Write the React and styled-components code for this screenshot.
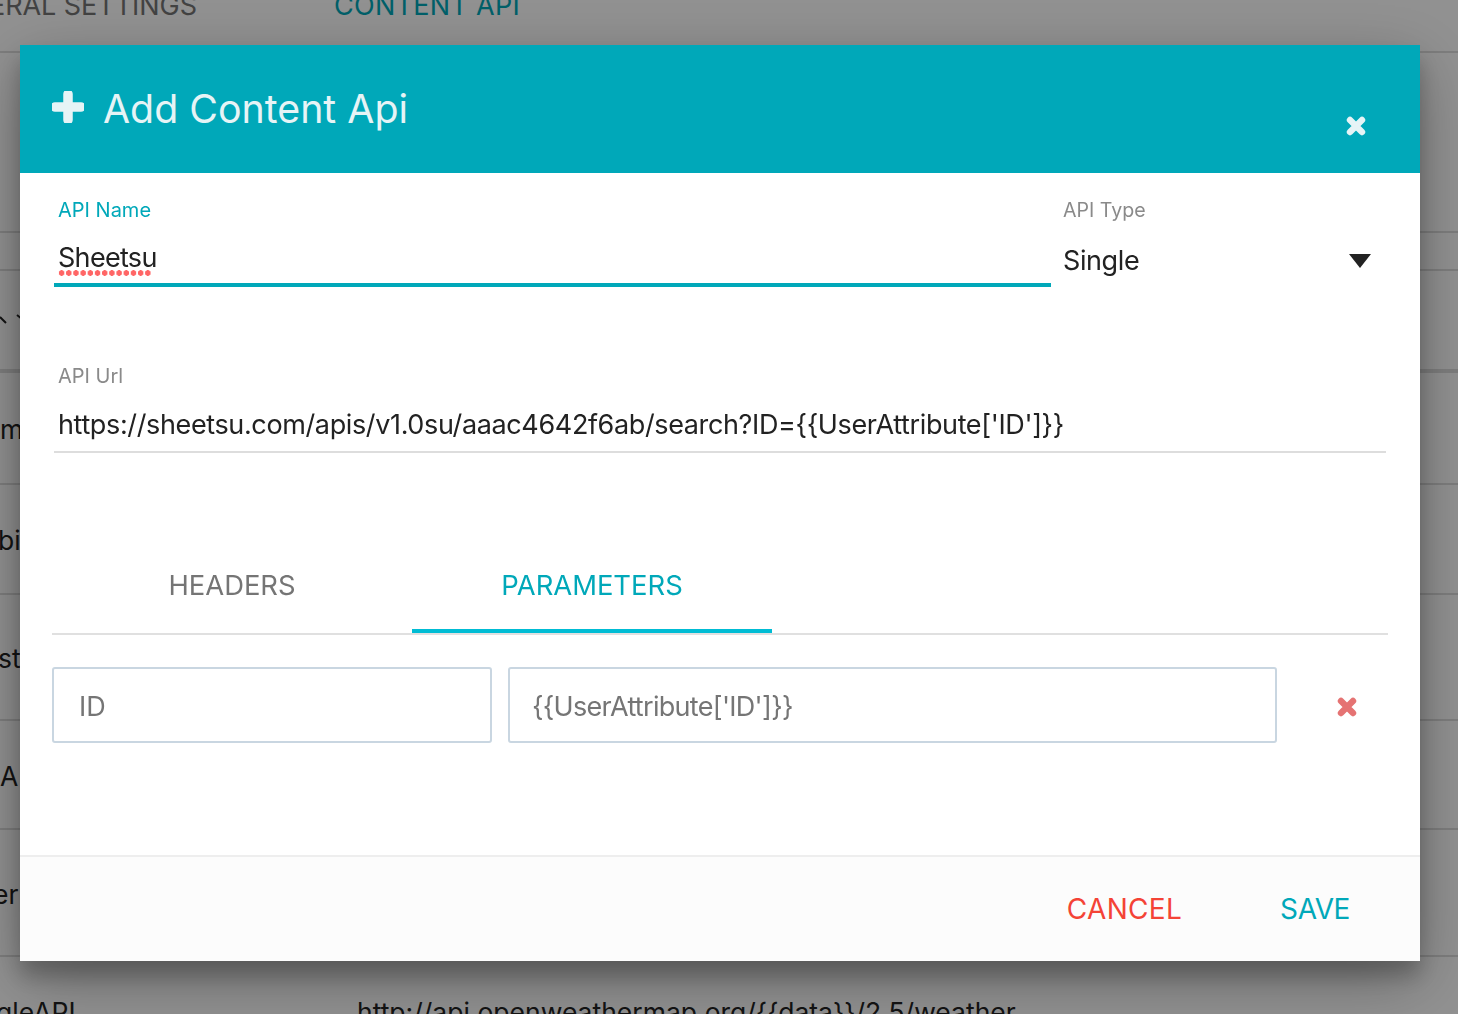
import styled, { createGlobalStyle } from "styled-components";

const GlobalStyle = createGlobalStyle`
  html, body {
    margin: 0;
    height: 100%;
    overflow: hidden;
    font-family: Inter, "Liberation Sans", sans-serif;
  }
`;

const backRows = [
  { height: 180 },
  { height: 38 },
  { height: 102, sort: true, strong: true },
  { height: 112, name: "m", x: 0 },
  { height: 110, name: "bi", x: -2 },
  { height: 126, name: "st", x: -2 },
  { height: 109, name: "A", x: 0 },
  { height: 127, name: "er", x: -7 },
  { height: 110, name: "gleAPI", x: -4, url: "http://api.openweathermap.org/{{data}}/2.5/weather" },
];

const PlusIcon = () => (
  <PlusSvg viewBox="0 0 32 32">
    <path d="M16 3v26M3 16h26" fill="none" stroke="currentColor" strokeWidth="9.5" strokeLinecap="round" />
  </PlusSvg>
);

const CrossIcon = () => (
  <svg width="20" height="20" viewBox="0 0 20 20">
    <path d="M4 4l12 12M16 4L4 16" fill="none" stroke="currentColor" strokeWidth="6.4" strokeLinecap="round" />
  </svg>
);

const SortMarks = () => (
  <svg width="24" height="14" viewBox="0 0 24 14">
    <path d="M0 3l6 6M17 1l5 4" fill="none" stroke="#222" strokeWidth="2" />
  </svg>
);

const App = () => {
  return (
    <>
      <GlobalStyle />
      <Page>
        <BackTabs>
          <BackTab>ERAL SETTINGS</BackTab>
          <BackTab $active>CONTENT API</BackTab>
        </BackTabs>
        {backRows.map((row, i) => (
          <BackRow key={i} $height={row.height} $strong={row.strong}>
            <BackName $x={row.x}>
              {row.sort && <SortMarks />}
              {row.name}
            </BackName>
            <BackUrl>{row.url}</BackUrl>
          </BackRow>
        ))}
      </Page>

      <Overlay>
        <Modal>
          <Header>
            <HeaderTitle>
              <PlusIcon />
              <Title>Add Content Api</Title>
            </HeaderTitle>
            <CloseButton>
              <CrossIcon />
            </CloseButton>
          </Header>

          <Body>
            <TopFields>
              <Field>
                <Label $focus>API Name</Label>
                <NameValue>
                  <Misspelled>Sheetsu</Misspelled>
                </NameValue>
              </Field>
              <SelectField>
                <SelectLabel>API Type</SelectLabel>
                <SelectValue>
                  Single
                  <Caret />
                </SelectValue>
              </SelectField>
            </TopFields>

            <UrlField>
              <Label>API Url</Label>
              <UrlValue>{"https://sheetsu.com/apis/v1.0su/aaac4642f6ab/search?ID={{UserAttribute['ID']}}"}</UrlValue>
            </UrlField>

            <Tabs>
              <Tab>HEADERS</Tab>
              <Tab $active>PARAMETERS</Tab>
            </Tabs>

            <ParamRow>
              <ParamInput $width={440} $pad={25}>
                ID
              </ParamInput>
              <ParamInput $width={769} $pad={22} $spacing={-0.7}>
                {"{{UserAttribute['ID']}}"}
              </ParamInput>
              <DeleteButton>
                <CrossIcon />
              </DeleteButton>
            </ParamRow>
          </Body>

          <Footer>
            <FooterButton $color="#f44336" $spacing={0.3}>
              CANCEL
            </FooterButton>
            <FooterButton $color="#00a8b9" $spacing={-0.4}>
              SAVE
            </FooterButton>
          </Footer>
        </Modal>
      </Overlay>
    </>
  );
};

export default App;

const Page = styled.div`
  height: 1014px;
  overflow: hidden;
  background: #fff;
  color: #222;
`;

const BackTabs = styled.div`
  display: flex;
  gap: 137px;
  height: 62px;
  box-sizing: border-box;
  border-bottom: 2px solid #ddd;
  margin-top: -9px;
  margin-left: -11px;
`;

const BackTab = styled.div`
  font-size: 27px;
  line-height: 30px;
  letter-spacing: ${(p) => (p.$active ? 0.3 : -0.05)}px;
  color: ${(p) => (p.$active ? "#00a8b9" : "#757575")};
`;

const BackRow = styled.div`
  display: flex;
  align-items: center;
  height: ${(p) => p.$height}px;
  box-sizing: border-box;
  padding-top: 2px;
  border-bottom: ${(p) => (p.$strong ? 4 : 2)}px solid #ddd;
  font-size: 26.5px;
`;

const BackName = styled.div`
  display: flex;
  flex: none;
  width: 357px;
  box-sizing: border-box;
  margin-left: ${(p) => p.$x || 0}px;
  margin-right: ${(p) => -(p.$x || 0)}px;
`;

const BackUrl = styled.div`
  white-space: nowrap;
`;

const Overlay = styled.div`
  position: fixed;
  inset: 0;
  background: rgba(0, 0, 0, 0.43);
`;

const Modal = styled.div`
  position: absolute;
  left: 20px;
  top: 45px;
  width: 1400px;
  height: 916px;
  display: flex;
  flex-direction: column;
  background: #fff;
  box-shadow: 0 19px 60px rgba(0, 0, 0, 0.3), 0 15px 20px rgba(0, 0, 0, 0.22);
`;

const Header = styled.div`
  height: 128px;
  flex: none;
  display: flex;
  justify-content: space-between;
  background: #00a8b9;
  color: #e6f4f6;
  padding: 0 54px 0 32px;
  box-sizing: border-box;
`;

const HeaderTitle = styled.div`
  display: flex;
  align-items: center;
  gap: 19px;
  height: 128px;
`;

const PlusSvg = styled.svg`
  width: 32px;
  height: 32px;
  margin-bottom: 4px;
`;

const Title = styled.h1`
  margin: 0 0 2px;
  font-size: 39.3px;
  font-weight: 400;
`;

const CloseButton = styled.div`
  display: flex;
  margin-top: 71px;
`;

const Body = styled.div`
  flex: 1;
  padding: 0 32px;
`;

const TopFields = styled.div`
  display: flex;
  margin-top: 24px;
  gap: 12px;
`;

const Field = styled.div`
  flex: none;
  width: 997px;
  margin-left: 2px;
`;

const SelectField = styled.div`
  width: 308px;
`;

const UrlField = styled.div`
  margin: 76px 2px 0;
`;

const Label = styled.div`
  font-size: 20px;
  line-height: 26px;
  padding-left: 4px;
  color: ${(p) => (p.$focus ? "#00a8b9" : "#8a8a8a")};
`;

const SelectLabel = styled(Label)`
  padding-left: 0;
  font-size: 19.6px;
`;

const NameValue = styled.div`
  font-size: 27px;
  line-height: 38px;
  letter-spacing: -0.7px;
  padding: 16px 4px 6px;
  color: #222;
  border-bottom: 4px solid #00a8b9;
`;

const UrlValue = styled.div`
  font-size: 27px;
  line-height: 38px;
  letter-spacing: -0.37px;
  padding: 17px 4px 7px;
  color: #222;
  white-space: nowrap;
  border-bottom: 2px solid #ddd;
`;

const Misspelled = styled.span`
  position: relative;
  &::after {
    content: "";
    position: absolute;
    left: 0;
    width: 94px;
    bottom: -2px;
    height: 6px;
    background: radial-gradient(circle, #f66 2.6px, transparent 3px) 0 0 / 7.2px 6px repeat-x;
  }
`;

const SelectValue = styled.div`
  display: flex;
  align-items: center;
  justify-content: space-between;
  font-size: 27px;
  line-height: 38px;
  letter-spacing: -0.4px;
  padding-top: 19px;
  color: #222;
`;

const Caret = styled.span`
  width: 0;
  height: 0;
  border-left: 11px solid transparent;
  border-right: 11px solid transparent;
  border-top: 14px solid #222;
`;

const Tabs = styled.div`
  display: flex;
  height: 102px;
  margin-top: 78px;
  border-bottom: 2px solid #e0e0e0;
`;

const Tab = styled.div`
  width: 360px;
  box-sizing: border-box;
  text-align: center;
  font-size: 27.4px;
  line-height: 38px;
  padding-top: 35px;
  color: ${(p) => (p.$active ? "#00a8b9" : "#757575")};
  border-bottom: 4px solid ${(p) => (p.$active ? "#00bcd4" : "transparent")};
`;

const ParamRow = styled.div`
  display: flex;
  align-items: center;
  gap: 16px;
  margin-top: 32px;
`;

const ParamInput = styled.div`
  width: ${(p) => p.$width}px;
  height: 76px;
  box-sizing: border-box;
  border: 2px solid #c9d6e1;
  border-radius: 3px;
  padding: 4px ${(p) => p.$pad}px 0;
  font-size: 27px;
  line-height: 67px;
  letter-spacing: ${(p) => p.$spacing || 0}px;
  color: #757575;
`;

const DeleteButton = styled.div`
  display: flex;
  margin: 4px 0 0 44px;
  color: #e57373;
`;

const Footer = styled.div`
  height: 106px;
  flex: none;
  display: flex;
  justify-content: flex-end;
  align-items: center;
  gap: 98px;
  padding-right: 70px;
  box-sizing: border-box;
  background: #fcfcfc;
  border-top: 2px solid #eee;
`;

const FooterButton = styled.div`
  font-size: 28px;
  letter-spacing: ${(p) => p.$spacing}px;
  color: ${(p) => p.$color};
`;
